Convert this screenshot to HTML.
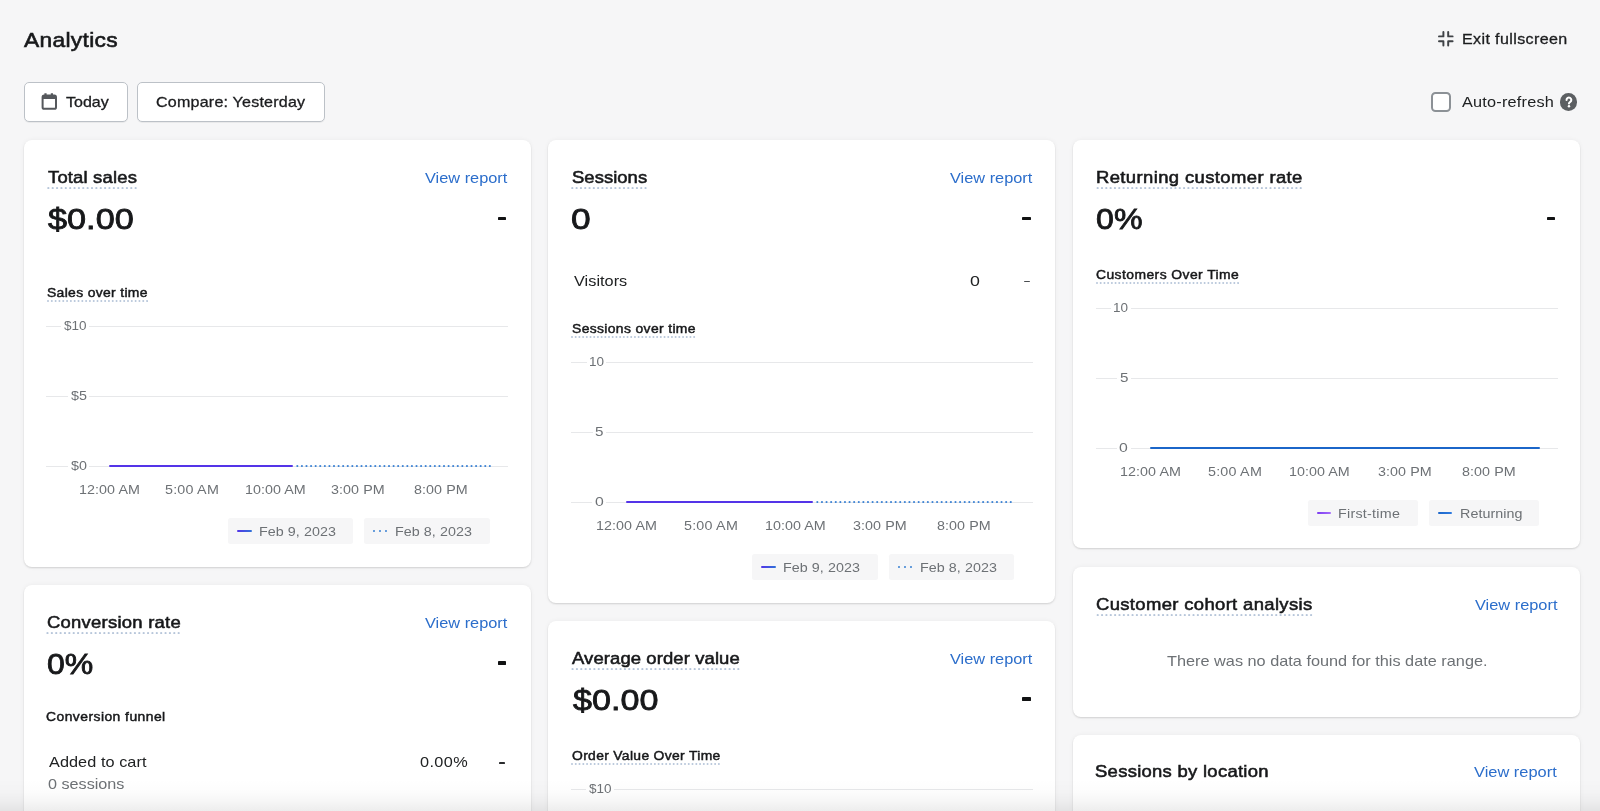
<!DOCTYPE html>
<html>
<head>
<meta charset="utf-8">
<title>Analytics</title>
<style>
*{box-sizing:border-box;margin:0;padding:0}
html,body{width:1600px;height:811px;overflow:hidden;background:#f6f6f7}
#w{position:absolute;left:0;top:0;width:1600px;height:811px;will-change:transform}
body{font-family:"Liberation Sans",sans-serif;color:#202223;position:relative;font-size:15px}
.a{position:absolute;white-space:nowrap;line-height:20px;height:20px}
.card{position:absolute;background:#fff;border-radius:8px;box-shadow:0 0 5px rgba(23,24,24,.05),0 1px 2px rgba(0,0,0,.14)}
.h1{font-size:21px;color:#17181a;-webkit-text-stroke:.6px #17181a}
.btn{position:absolute;background:#fff;border:1px solid #bcc1c7;border-radius:5px;box-shadow:0 1px 0 rgba(0,0,0,.05)}
.med{font-size:14.8px;color:#1b1c1e;-webkit-text-stroke:.3px #1b1c1e}
.reg{font-size:15px}
.title{font-size:17px;color:#17181a;-webkit-text-stroke:.56px #17181a}
.link{font-size:15.2px;color:#2c6ecb}
.big{font-size:30.2px;color:#17181a;-webkit-text-stroke:.85px #17181a}
.sub{font-size:12.8px;color:#17181a;-webkit-text-stroke:.46px #17181a}
.muted{color:#6d7175}
.ax{font-size:13px;color:#6d7175}
.yl{background:#fff}
.grid{position:absolute;height:1px;background:#e7e8ea}
.ln{position:absolute}
.leg{position:absolute;background:#f6f6f7;border-radius:2.5px}
.fade{position:absolute;left:0;right:0;bottom:0;height:32px;background:linear-gradient(to bottom,rgba(0,0,0,0) 0,rgba(0,0,0,.012) 40%,rgba(0,0,0,.035) 70%,rgba(0,0,0,.072) 100%)}
</style>
</head>
<body>
<div id="w">
<div class="a h1" style="left:24.37px;top:29.62px;letter-spacing:0.292px;transform:scaleX(1.0850);transform-origin:0 0;">Analytics</div>
<svg class="ln" style="left:1438.4px;top:31.3px;width:15.6px;height:15.6px" viewBox="0 0 15.6 15.6" fill="none" stroke="#3f4246" stroke-width="1.95" stroke-linecap="round" stroke-linejoin="round"><path d="M1 5.4H5.4V1M10.2 1V5.4H14.6M14.6 10.2H10.2V14.6M5.4 14.6V10.2H1"/></svg>
<div class="a med" style="left:1461.71px;top:29.17px;letter-spacing:0.348px;transform:scaleX(1.0850);transform-origin:0 0;">Exit fullscreen</div>
<div class="btn" style="left:24px;top:82px;width:104px;height:40px"></div>
<svg class="ln" style="left:41px;top:92.6px;width:17px;height:17.4px" viewBox="0 0 17 17.4"><rect x="1.6" y="2.6" width="13.4" height="13.2" rx="1.6" fill="none" stroke="#55585c" stroke-width="2"/><path d="M1.6 2.6h13.4v3.3H1.6zM3.4 .2h2.2v3H3.4zM9.8 .2h2.2v3H9.8z" fill="#55585c"/></svg>
<div class="a med" style="left:65.73px;top:91.77px;transform:scaleX(1.0828);transform-origin:0 0;">Today</div>
<div class="btn" style="left:137px;top:82px;width:188px;height:40px"></div>
<div class="a med" style="left:155.96px;top:91.77px;letter-spacing:0.197px;transform:scaleX(1.0850);transform-origin:0 0;">Compare: Yesterday</div>
<div class="ln" style="left:1431.2px;top:91.6px;width:20px;height:20px;border:2.1px solid #8c9196;border-radius:4.5px;background:#fff"></div>
<div class="a reg" style="left:1461.80px;top:91.60px;letter-spacing:0.190px;transform:scaleX(1.0850);transform-origin:0 0;">Auto-refresh</div>
<div class="ln" style="left:1559.8px;top:92.9px;width:17.7px;height:17.7px;border-radius:50%;background:#5c5f62"></div>
<svg class="ln" style="left:1559.8px;top:92.9px;width:17.7px;height:17.7px" viewBox="0 0 20 20"><path d="M7.4 7.9a2.7 2.7 0 1 1 4.2 2.2c-.85.55-1.45 1-1.45 1.8" fill="none" stroke="#fff" stroke-width="2.3" stroke-linecap="round"/><circle cx="10.15" cy="14.9" r="1.4" fill="#fff"/></svg>
<div class="card" style="left:23.5px;top:140px;width:507.2px;height:427.4px"></div>
<div class="a title" style="left:47.75px;top:168.11px;letter-spacing:0.157px;transform:scaleX(1.0850);transform-origin:0 0;">Total sales</div>
<svg class="ln" style="left:46.85px;top:187.30px;width:90.0px;height:2.2px" viewBox="0 0 90.0 2.2" fill="#b7c6da"><rect x="0.00" y="0" width="2.2" height="2.2" rx="1.10"/><rect x="4.39" y="0" width="2.2" height="2.2" rx="1.10"/><rect x="8.78" y="0" width="2.2" height="2.2" rx="1.10"/><rect x="13.17" y="0" width="2.2" height="2.2" rx="1.10"/><rect x="17.56" y="0" width="2.2" height="2.2" rx="1.10"/><rect x="21.95" y="0" width="2.2" height="2.2" rx="1.10"/><rect x="26.34" y="0" width="2.2" height="2.2" rx="1.10"/><rect x="30.73" y="0" width="2.2" height="2.2" rx="1.10"/><rect x="35.12" y="0" width="2.2" height="2.2" rx="1.10"/><rect x="39.51" y="0" width="2.2" height="2.2" rx="1.10"/><rect x="43.90" y="0" width="2.2" height="2.2" rx="1.10"/><rect x="48.29" y="0" width="2.2" height="2.2" rx="1.10"/><rect x="52.68" y="0" width="2.2" height="2.2" rx="1.10"/><rect x="57.07" y="0" width="2.2" height="2.2" rx="1.10"/><rect x="61.46" y="0" width="2.2" height="2.2" rx="1.10"/><rect x="65.85" y="0" width="2.2" height="2.2" rx="1.10"/><rect x="70.24" y="0" width="2.2" height="2.2" rx="1.10"/><rect x="74.63" y="0" width="2.2" height="2.2" rx="1.10"/><rect x="79.02" y="0" width="2.2" height="2.2" rx="1.10"/><rect x="83.41" y="0" width="2.2" height="2.2" rx="1.10"/><rect x="87.80" y="0" width="2.2" height="2.2" rx="1.10"/></svg>
<div class="a link" style="left:424.90px;top:167.93px;transform:scaleX(1.0758);transform-origin:0 0;">View report</div>
<div class="a big" style="left:47.88px;top:208.89px;transform:scaleX(1.1353);transform-origin:0 0;">$0.00</div>
<div class="ln" style="left:497.8px;top:216.50px;width:8.5px;height:3.4px;background:#111213;border-radius:.4px"></div>
<div class="a sub" style="left:47.23px;top:282.81px;letter-spacing:0.317px;transform:scaleX(1.0850);transform-origin:0 0;">Sales over time</div>
<svg class="ln" style="left:46.7px;top:300.25px;width:101.0px;height:2.0px" viewBox="0 0 101.0 2.0" fill="#b7c6da"><rect x="0.00" y="0" width="2.0" height="2.0" rx="1.00"/><rect x="3.81" y="0" width="2.0" height="2.0" rx="1.00"/><rect x="7.62" y="0" width="2.0" height="2.0" rx="1.00"/><rect x="11.43" y="0" width="2.0" height="2.0" rx="1.00"/><rect x="15.24" y="0" width="2.0" height="2.0" rx="1.00"/><rect x="19.05" y="0" width="2.0" height="2.0" rx="1.00"/><rect x="22.86" y="0" width="2.0" height="2.0" rx="1.00"/><rect x="26.67" y="0" width="2.0" height="2.0" rx="1.00"/><rect x="30.48" y="0" width="2.0" height="2.0" rx="1.00"/><rect x="34.29" y="0" width="2.0" height="2.0" rx="1.00"/><rect x="38.10" y="0" width="2.0" height="2.0" rx="1.00"/><rect x="41.91" y="0" width="2.0" height="2.0" rx="1.00"/><rect x="45.72" y="0" width="2.0" height="2.0" rx="1.00"/><rect x="49.52" y="0" width="2.0" height="2.0" rx="1.00"/><rect x="53.33" y="0" width="2.0" height="2.0" rx="1.00"/><rect x="57.14" y="0" width="2.0" height="2.0" rx="1.00"/><rect x="60.95" y="0" width="2.0" height="2.0" rx="1.00"/><rect x="64.76" y="0" width="2.0" height="2.0" rx="1.00"/><rect x="68.57" y="0" width="2.0" height="2.0" rx="1.00"/><rect x="72.38" y="0" width="2.0" height="2.0" rx="1.00"/><rect x="76.19" y="0" width="2.0" height="2.0" rx="1.00"/><rect x="80.00" y="0" width="2.0" height="2.0" rx="1.00"/><rect x="83.81" y="0" width="2.0" height="2.0" rx="1.00"/><rect x="87.62" y="0" width="2.0" height="2.0" rx="1.00"/><rect x="91.43" y="0" width="2.0" height="2.0" rx="1.00"/><rect x="95.24" y="0" width="2.0" height="2.0" rx="1.00"/><rect x="99.05" y="0" width="2.0" height="2.0" rx="1.00"/></svg>
<div class="grid" style="left:46px;top:325.75px;width:461.5px"></div>
<div class="ln" style="left:61.2px;top:320.25px;width:28.2px;height:12px;background:#fff"></div>
<div class="a ax" style="left:64.19px;top:315.65px;transform:scaleX(1.0381);transform-origin:0 0;">$10</div>
<div class="grid" style="left:46px;top:395.75px;width:461.5px"></div>
<div class="ln" style="left:67.8px;top:390.25px;width:21.6px;height:12px;background:#fff"></div>
<div class="a ax" style="left:70.77px;top:385.65px;letter-spacing:0.068px;transform:scaleX(1.1000);transform-origin:0 0;">$5</div>
<div class="grid" style="left:46px;top:465.75px;width:461.5px"></div>
<div class="ln" style="left:67.8px;top:460.25px;width:21.6px;height:12px;background:#fff"></div>
<div class="a ax" style="left:70.77px;top:455.65px;letter-spacing:0.068px;transform:scaleX(1.1000);transform-origin:0 0;">$0</div>
<div class="a ax" style="left:78.60px;top:479.90px;letter-spacing:0.065px;transform:scaleX(1.1000);transform-origin:0 0;">12:00 AM</div>
<div class="a ax" style="left:165.35px;top:479.90px;letter-spacing:0.201px;transform:scaleX(1.1000);transform-origin:0 0;">5:00 AM</div>
<div class="a ax" style="left:244.55px;top:479.90px;letter-spacing:0.026px;transform:scaleX(1.1000);transform-origin:0 0;">10:00 AM</div>
<div class="a ax" style="left:331.35px;top:479.90px;letter-spacing:0.072px;transform:scaleX(1.1000);transform-origin:0 0;">3:00 PM</div>
<div class="a ax" style="left:414.20px;top:479.90px;letter-spacing:0.072px;transform:scaleX(1.1000);transform-origin:0 0;">8:00 PM</div>
<svg class="ln" style="left:296.2px;top:465.15px;width:195.2px;height:2.1px" viewBox="0 0 195.2 2.1" fill="#3f84d4"><rect x="0.00" y="0" width="2.1" height="2.1" rx="1.05"/><rect x="4.60" y="0" width="2.1" height="2.1" rx="1.05"/><rect x="9.20" y="0" width="2.1" height="2.1" rx="1.05"/><rect x="13.79" y="0" width="2.1" height="2.1" rx="1.05"/><rect x="18.39" y="0" width="2.1" height="2.1" rx="1.05"/><rect x="22.99" y="0" width="2.1" height="2.1" rx="1.05"/><rect x="27.59" y="0" width="2.1" height="2.1" rx="1.05"/><rect x="32.18" y="0" width="2.1" height="2.1" rx="1.05"/><rect x="36.78" y="0" width="2.1" height="2.1" rx="1.05"/><rect x="41.38" y="0" width="2.1" height="2.1" rx="1.05"/><rect x="45.98" y="0" width="2.1" height="2.1" rx="1.05"/><rect x="50.57" y="0" width="2.1" height="2.1" rx="1.05"/><rect x="55.17" y="0" width="2.1" height="2.1" rx="1.05"/><rect x="59.77" y="0" width="2.1" height="2.1" rx="1.05"/><rect x="64.37" y="0" width="2.1" height="2.1" rx="1.05"/><rect x="68.96" y="0" width="2.1" height="2.1" rx="1.05"/><rect x="73.56" y="0" width="2.1" height="2.1" rx="1.05"/><rect x="78.16" y="0" width="2.1" height="2.1" rx="1.05"/><rect x="82.76" y="0" width="2.1" height="2.1" rx="1.05"/><rect x="87.35" y="0" width="2.1" height="2.1" rx="1.05"/><rect x="91.95" y="0" width="2.1" height="2.1" rx="1.05"/><rect x="96.55" y="0" width="2.1" height="2.1" rx="1.05"/><rect x="101.15" y="0" width="2.1" height="2.1" rx="1.05"/><rect x="105.75" y="0" width="2.1" height="2.1" rx="1.05"/><rect x="110.34" y="0" width="2.1" height="2.1" rx="1.05"/><rect x="114.94" y="0" width="2.1" height="2.1" rx="1.05"/><rect x="119.54" y="0" width="2.1" height="2.1" rx="1.05"/><rect x="124.14" y="0" width="2.1" height="2.1" rx="1.05"/><rect x="128.73" y="0" width="2.1" height="2.1" rx="1.05"/><rect x="133.33" y="0" width="2.1" height="2.1" rx="1.05"/><rect x="137.93" y="0" width="2.1" height="2.1" rx="1.05"/><rect x="142.53" y="0" width="2.1" height="2.1" rx="1.05"/><rect x="147.12" y="0" width="2.1" height="2.1" rx="1.05"/><rect x="151.72" y="0" width="2.1" height="2.1" rx="1.05"/><rect x="156.32" y="0" width="2.1" height="2.1" rx="1.05"/><rect x="160.92" y="0" width="2.1" height="2.1" rx="1.05"/><rect x="165.51" y="0" width="2.1" height="2.1" rx="1.05"/><rect x="170.11" y="0" width="2.1" height="2.1" rx="1.05"/><rect x="174.71" y="0" width="2.1" height="2.1" rx="1.05"/><rect x="179.31" y="0" width="2.1" height="2.1" rx="1.05"/><rect x="183.90" y="0" width="2.1" height="2.1" rx="1.05"/><rect x="188.50" y="0" width="2.1" height="2.1" rx="1.05"/><rect x="193.10" y="0" width="2.1" height="2.1" rx="1.05"/></svg>
<div class="ln" style="left:109.4px;top:464.90px;width:183.9px;height:2.3px;background:#5434e8;border-radius:1px"></div>
<div class="leg" style="left:228.2px;top:517.9px;width:124.8px;height:26.3px"></div>
<div class="ln" style="left:237.0px;top:529.90px;width:14.5px;height:2.2px;background:linear-gradient(to right,#5434e8,#2f73d8);border-radius:1px"></div>
<div class="a ax" style="left:258.80px;top:522.10px;letter-spacing:0.052px;transform:scaleX(1.1000);transform-origin:0 0;">Feb 9, 2023</div>
<div class="leg" style="left:364.4px;top:517.9px;width:125.6px;height:26.3px"></div>
<div class="ln" style="left:373.2px;top:530.10px;width:1.8px;height:1.8px;border-radius:50%;background:#3f84d4"></div>
<div class="ln" style="left:379.3px;top:530.10px;width:1.8px;height:1.8px;border-radius:50%;background:#3f84d4"></div>
<div class="ln" style="left:385.4px;top:530.10px;width:1.8px;height:1.8px;border-radius:50%;background:#3f84d4"></div>
<div class="a ax" style="left:395.30px;top:522.10px;letter-spacing:0.052px;transform:scaleX(1.1000);transform-origin:0 0;">Feb 8, 2023</div>
<div class="card" style="left:548px;top:140px;width:507.2px;height:463.2px"></div>
<div class="a title" style="left:571.71px;top:168.11px;letter-spacing:0.039px;transform:scaleX(1.0850);transform-origin:0 0;">Sessions</div>
<svg class="ln" style="left:571.35px;top:187.30px;width:75.9px;height:2.2px" viewBox="0 0 75.9 2.2" fill="#b7c6da"><rect x="0.00" y="0" width="2.2" height="2.2" rx="1.10"/><rect x="4.33" y="0" width="2.2" height="2.2" rx="1.10"/><rect x="8.66" y="0" width="2.2" height="2.2" rx="1.10"/><rect x="13.00" y="0" width="2.2" height="2.2" rx="1.10"/><rect x="17.33" y="0" width="2.2" height="2.2" rx="1.10"/><rect x="21.66" y="0" width="2.2" height="2.2" rx="1.10"/><rect x="25.99" y="0" width="2.2" height="2.2" rx="1.10"/><rect x="30.33" y="0" width="2.2" height="2.2" rx="1.10"/><rect x="34.66" y="0" width="2.2" height="2.2" rx="1.10"/><rect x="38.99" y="0" width="2.2" height="2.2" rx="1.10"/><rect x="43.32" y="0" width="2.2" height="2.2" rx="1.10"/><rect x="47.66" y="0" width="2.2" height="2.2" rx="1.10"/><rect x="51.99" y="0" width="2.2" height="2.2" rx="1.10"/><rect x="56.32" y="0" width="2.2" height="2.2" rx="1.10"/><rect x="60.65" y="0" width="2.2" height="2.2" rx="1.10"/><rect x="64.99" y="0" width="2.2" height="2.2" rx="1.10"/><rect x="69.32" y="0" width="2.2" height="2.2" rx="1.10"/><rect x="73.65" y="0" width="2.2" height="2.2" rx="1.10"/></svg>
<div class="a link" style="left:949.60px;top:167.93px;transform:scaleX(1.0758);transform-origin:0 0;">View report</div>
<div class="a big" style="left:571.02px;top:208.89px;transform:scaleX(1.1705);transform-origin:0 0;">0</div>
<div class="ln" style="left:1022px;top:216.50px;width:8.5px;height:3.4px;background:#111213;border-radius:.4px"></div>
<div class="a reg" style="left:573.65px;top:271.05px;letter-spacing:0.020px;transform:scaleX(1.0850);transform-origin:0 0;">Visitors</div>
<div class="a reg" style="left:969.81px;top:271.05px;transform:scaleX(1.1862);transform-origin:0 0;">0</div>
<div class="ln" style="left:1023.9px;top:281.10px;width:5.7px;height:1.3px;background:#4a4d50;border-radius:.4px"></div>
<div class="a sub" style="left:571.98px;top:318.56px;letter-spacing:0.337px;transform:scaleX(1.0850);transform-origin:0 0;">Sessions over time</div>
<svg class="ln" style="left:571.45px;top:336.00px;width:124.1px;height:2.0px" viewBox="0 0 124.1 2.0" fill="#b7c6da"><rect x="0.00" y="0" width="2.0" height="2.0" rx="1.00"/><rect x="3.70" y="0" width="2.0" height="2.0" rx="1.00"/><rect x="7.40" y="0" width="2.0" height="2.0" rx="1.00"/><rect x="11.10" y="0" width="2.0" height="2.0" rx="1.00"/><rect x="14.81" y="0" width="2.0" height="2.0" rx="1.00"/><rect x="18.51" y="0" width="2.0" height="2.0" rx="1.00"/><rect x="22.21" y="0" width="2.0" height="2.0" rx="1.00"/><rect x="25.91" y="0" width="2.0" height="2.0" rx="1.00"/><rect x="29.61" y="0" width="2.0" height="2.0" rx="1.00"/><rect x="33.31" y="0" width="2.0" height="2.0" rx="1.00"/><rect x="37.02" y="0" width="2.0" height="2.0" rx="1.00"/><rect x="40.72" y="0" width="2.0" height="2.0" rx="1.00"/><rect x="44.42" y="0" width="2.0" height="2.0" rx="1.00"/><rect x="48.12" y="0" width="2.0" height="2.0" rx="1.00"/><rect x="51.82" y="0" width="2.0" height="2.0" rx="1.00"/><rect x="55.52" y="0" width="2.0" height="2.0" rx="1.00"/><rect x="59.22" y="0" width="2.0" height="2.0" rx="1.00"/><rect x="62.93" y="0" width="2.0" height="2.0" rx="1.00"/><rect x="66.63" y="0" width="2.0" height="2.0" rx="1.00"/><rect x="70.33" y="0" width="2.0" height="2.0" rx="1.00"/><rect x="74.03" y="0" width="2.0" height="2.0" rx="1.00"/><rect x="77.73" y="0" width="2.0" height="2.0" rx="1.00"/><rect x="81.43" y="0" width="2.0" height="2.0" rx="1.00"/><rect x="85.13" y="0" width="2.0" height="2.0" rx="1.00"/><rect x="88.84" y="0" width="2.0" height="2.0" rx="1.00"/><rect x="92.54" y="0" width="2.0" height="2.0" rx="1.00"/><rect x="96.24" y="0" width="2.0" height="2.0" rx="1.00"/><rect x="99.94" y="0" width="2.0" height="2.0" rx="1.00"/><rect x="103.64" y="0" width="2.0" height="2.0" rx="1.00"/><rect x="107.34" y="0" width="2.0" height="2.0" rx="1.00"/><rect x="111.05" y="0" width="2.0" height="2.0" rx="1.00"/><rect x="114.75" y="0" width="2.0" height="2.0" rx="1.00"/><rect x="118.45" y="0" width="2.0" height="2.0" rx="1.00"/><rect x="122.15" y="0" width="2.0" height="2.0" rx="1.00"/></svg>
<div class="grid" style="left:571px;top:361.75px;width:461.5px"></div>
<div class="ln" style="left:586.5px;top:356.25px;width:19.9px;height:12px;background:#fff"></div>
<div class="a ax" style="left:588.66px;top:351.65px;transform:scaleX(1.0385);transform-origin:0 0;">10</div>
<div class="grid" style="left:571px;top:431.75px;width:461.5px"></div>
<div class="ln" style="left:592.7px;top:426.25px;width:13.7px;height:12px;background:#fff"></div>
<div class="a ax" style="left:595.32px;top:421.65px;transform:scaleX(1.1680);transform-origin:0 0;">5</div>
<div class="grid" style="left:571px;top:501.75px;width:461.5px"></div>
<div class="ln" style="left:592.4px;top:496.25px;width:14.0px;height:12px;background:#fff"></div>
<div class="a ax" style="left:594.99px;top:491.65px;transform:scaleX(1.2160);transform-origin:0 0;">0</div>
<div class="a ax" style="left:595.50px;top:515.90px;letter-spacing:0.065px;transform:scaleX(1.1000);transform-origin:0 0;">12:00 AM</div>
<div class="a ax" style="left:683.80px;top:515.90px;letter-spacing:0.201px;transform:scaleX(1.1000);transform-origin:0 0;">5:00 AM</div>
<div class="a ax" style="left:764.55px;top:515.90px;letter-spacing:0.026px;transform:scaleX(1.1000);transform-origin:0 0;">10:00 AM</div>
<div class="a ax" style="left:852.85px;top:515.90px;letter-spacing:0.072px;transform:scaleX(1.1000);transform-origin:0 0;">3:00 PM</div>
<div class="a ax" style="left:937.30px;top:515.90px;letter-spacing:0.072px;transform:scaleX(1.1000);transform-origin:0 0;">8:00 PM</div>
<svg class="ln" style="left:816.3px;top:501.15px;width:196.1px;height:2.1px" viewBox="0 0 196.1 2.1" fill="#3f84d4"><rect x="0.00" y="0" width="2.1" height="2.1" rx="1.05"/><rect x="4.62" y="0" width="2.1" height="2.1" rx="1.05"/><rect x="9.24" y="0" width="2.1" height="2.1" rx="1.05"/><rect x="13.86" y="0" width="2.1" height="2.1" rx="1.05"/><rect x="18.48" y="0" width="2.1" height="2.1" rx="1.05"/><rect x="23.10" y="0" width="2.1" height="2.1" rx="1.05"/><rect x="27.71" y="0" width="2.1" height="2.1" rx="1.05"/><rect x="32.33" y="0" width="2.1" height="2.1" rx="1.05"/><rect x="36.95" y="0" width="2.1" height="2.1" rx="1.05"/><rect x="41.57" y="0" width="2.1" height="2.1" rx="1.05"/><rect x="46.19" y="0" width="2.1" height="2.1" rx="1.05"/><rect x="50.81" y="0" width="2.1" height="2.1" rx="1.05"/><rect x="55.43" y="0" width="2.1" height="2.1" rx="1.05"/><rect x="60.05" y="0" width="2.1" height="2.1" rx="1.05"/><rect x="64.67" y="0" width="2.1" height="2.1" rx="1.05"/><rect x="69.29" y="0" width="2.1" height="2.1" rx="1.05"/><rect x="73.90" y="0" width="2.1" height="2.1" rx="1.05"/><rect x="78.52" y="0" width="2.1" height="2.1" rx="1.05"/><rect x="83.14" y="0" width="2.1" height="2.1" rx="1.05"/><rect x="87.76" y="0" width="2.1" height="2.1" rx="1.05"/><rect x="92.38" y="0" width="2.1" height="2.1" rx="1.05"/><rect x="97.00" y="0" width="2.1" height="2.1" rx="1.05"/><rect x="101.62" y="0" width="2.1" height="2.1" rx="1.05"/><rect x="106.24" y="0" width="2.1" height="2.1" rx="1.05"/><rect x="110.86" y="0" width="2.1" height="2.1" rx="1.05"/><rect x="115.48" y="0" width="2.1" height="2.1" rx="1.05"/><rect x="120.10" y="0" width="2.1" height="2.1" rx="1.05"/><rect x="124.71" y="0" width="2.1" height="2.1" rx="1.05"/><rect x="129.33" y="0" width="2.1" height="2.1" rx="1.05"/><rect x="133.95" y="0" width="2.1" height="2.1" rx="1.05"/><rect x="138.57" y="0" width="2.1" height="2.1" rx="1.05"/><rect x="143.19" y="0" width="2.1" height="2.1" rx="1.05"/><rect x="147.81" y="0" width="2.1" height="2.1" rx="1.05"/><rect x="152.43" y="0" width="2.1" height="2.1" rx="1.05"/><rect x="157.05" y="0" width="2.1" height="2.1" rx="1.05"/><rect x="161.67" y="0" width="2.1" height="2.1" rx="1.05"/><rect x="166.29" y="0" width="2.1" height="2.1" rx="1.05"/><rect x="170.90" y="0" width="2.1" height="2.1" rx="1.05"/><rect x="175.52" y="0" width="2.1" height="2.1" rx="1.05"/><rect x="180.14" y="0" width="2.1" height="2.1" rx="1.05"/><rect x="184.76" y="0" width="2.1" height="2.1" rx="1.05"/><rect x="189.38" y="0" width="2.1" height="2.1" rx="1.05"/><rect x="194.00" y="0" width="2.1" height="2.1" rx="1.05"/></svg>
<div class="ln" style="left:626px;top:500.90px;width:186.8px;height:2.3px;background:#5434e8;border-radius:1px"></div>
<div class="leg" style="left:752.3px;top:553.9px;width:125.7px;height:26.3px"></div>
<div class="ln" style="left:761.1px;top:565.90px;width:14.5px;height:2.2px;background:linear-gradient(to right,#5434e8,#2f73d8);border-radius:1px"></div>
<div class="a ax" style="left:782.90px;top:558.10px;letter-spacing:0.052px;transform:scaleX(1.1000);transform-origin:0 0;">Feb 9, 2023</div>
<div class="leg" style="left:889px;top:553.9px;width:125.3px;height:26.3px"></div>
<div class="ln" style="left:897.8px;top:566.10px;width:1.8px;height:1.8px;border-radius:50%;background:#3f84d4"></div>
<div class="ln" style="left:903.9px;top:566.10px;width:1.8px;height:1.8px;border-radius:50%;background:#3f84d4"></div>
<div class="ln" style="left:910.0px;top:566.10px;width:1.8px;height:1.8px;border-radius:50%;background:#3f84d4"></div>
<div class="a ax" style="left:919.90px;top:558.10px;letter-spacing:0.052px;transform:scaleX(1.1000);transform-origin:0 0;">Feb 8, 2023</div>
<div class="card" style="left:1073px;top:140px;width:507.2px;height:408.2px"></div>
<div class="a title" style="left:1095.82px;top:168.11px;letter-spacing:0.357px;transform:scaleX(1.0850);transform-origin:0 0;">Returning customer rate</div>
<svg class="ln" style="left:1096.0px;top:187.30px;width:206.4px;height:2.2px" viewBox="0 0 206.4 2.2" fill="#b7c6da"><rect x="0.00" y="0" width="2.2" height="2.2" rx="1.10"/><rect x="4.34" y="0" width="2.2" height="2.2" rx="1.10"/><rect x="8.69" y="0" width="2.2" height="2.2" rx="1.10"/><rect x="13.03" y="0" width="2.2" height="2.2" rx="1.10"/><rect x="17.38" y="0" width="2.2" height="2.2" rx="1.10"/><rect x="21.72" y="0" width="2.2" height="2.2" rx="1.10"/><rect x="26.07" y="0" width="2.2" height="2.2" rx="1.10"/><rect x="30.41" y="0" width="2.2" height="2.2" rx="1.10"/><rect x="34.76" y="0" width="2.2" height="2.2" rx="1.10"/><rect x="39.10" y="0" width="2.2" height="2.2" rx="1.10"/><rect x="43.45" y="0" width="2.2" height="2.2" rx="1.10"/><rect x="47.79" y="0" width="2.2" height="2.2" rx="1.10"/><rect x="52.14" y="0" width="2.2" height="2.2" rx="1.10"/><rect x="56.48" y="0" width="2.2" height="2.2" rx="1.10"/><rect x="60.83" y="0" width="2.2" height="2.2" rx="1.10"/><rect x="65.17" y="0" width="2.2" height="2.2" rx="1.10"/><rect x="69.51" y="0" width="2.2" height="2.2" rx="1.10"/><rect x="73.86" y="0" width="2.2" height="2.2" rx="1.10"/><rect x="78.20" y="0" width="2.2" height="2.2" rx="1.10"/><rect x="82.55" y="0" width="2.2" height="2.2" rx="1.10"/><rect x="86.89" y="0" width="2.2" height="2.2" rx="1.10"/><rect x="91.24" y="0" width="2.2" height="2.2" rx="1.10"/><rect x="95.58" y="0" width="2.2" height="2.2" rx="1.10"/><rect x="99.93" y="0" width="2.2" height="2.2" rx="1.10"/><rect x="104.27" y="0" width="2.2" height="2.2" rx="1.10"/><rect x="108.62" y="0" width="2.2" height="2.2" rx="1.10"/><rect x="112.96" y="0" width="2.2" height="2.2" rx="1.10"/><rect x="117.31" y="0" width="2.2" height="2.2" rx="1.10"/><rect x="121.65" y="0" width="2.2" height="2.2" rx="1.10"/><rect x="126.00" y="0" width="2.2" height="2.2" rx="1.10"/><rect x="130.34" y="0" width="2.2" height="2.2" rx="1.10"/><rect x="134.69" y="0" width="2.2" height="2.2" rx="1.10"/><rect x="139.03" y="0" width="2.2" height="2.2" rx="1.10"/><rect x="143.37" y="0" width="2.2" height="2.2" rx="1.10"/><rect x="147.72" y="0" width="2.2" height="2.2" rx="1.10"/><rect x="152.06" y="0" width="2.2" height="2.2" rx="1.10"/><rect x="156.41" y="0" width="2.2" height="2.2" rx="1.10"/><rect x="160.75" y="0" width="2.2" height="2.2" rx="1.10"/><rect x="165.10" y="0" width="2.2" height="2.2" rx="1.10"/><rect x="169.44" y="0" width="2.2" height="2.2" rx="1.10"/><rect x="173.79" y="0" width="2.2" height="2.2" rx="1.10"/><rect x="178.13" y="0" width="2.2" height="2.2" rx="1.10"/><rect x="182.48" y="0" width="2.2" height="2.2" rx="1.10"/><rect x="186.82" y="0" width="2.2" height="2.2" rx="1.10"/><rect x="191.17" y="0" width="2.2" height="2.2" rx="1.10"/><rect x="195.51" y="0" width="2.2" height="2.2" rx="1.10"/><rect x="199.86" y="0" width="2.2" height="2.2" rx="1.10"/><rect x="204.20" y="0" width="2.2" height="2.2" rx="1.10"/></svg>
<div class="a big" style="left:1095.80px;top:208.89px;transform:scaleX(1.0651);transform-origin:0 0;">0%</div>
<div class="ln" style="left:1546.8px;top:216.50px;width:8.5px;height:3.4px;background:#111213;border-radius:.4px"></div>
<div class="a sub" style="left:1096.36px;top:264.71px;letter-spacing:0.397px;transform:scaleX(1.0850);transform-origin:0 0;">Customers Over Time</div>
<svg class="ln" style="left:1096.1000000000001px;top:282.15px;width:143.0px;height:2.0px" viewBox="0 0 143.0 2.0" fill="#b7c6da"><rect x="0.00" y="0" width="2.0" height="2.0" rx="1.00"/><rect x="3.71" y="0" width="2.0" height="2.0" rx="1.00"/><rect x="7.42" y="0" width="2.0" height="2.0" rx="1.00"/><rect x="11.14" y="0" width="2.0" height="2.0" rx="1.00"/><rect x="14.85" y="0" width="2.0" height="2.0" rx="1.00"/><rect x="18.56" y="0" width="2.0" height="2.0" rx="1.00"/><rect x="22.27" y="0" width="2.0" height="2.0" rx="1.00"/><rect x="25.98" y="0" width="2.0" height="2.0" rx="1.00"/><rect x="29.69" y="0" width="2.0" height="2.0" rx="1.00"/><rect x="33.41" y="0" width="2.0" height="2.0" rx="1.00"/><rect x="37.12" y="0" width="2.0" height="2.0" rx="1.00"/><rect x="40.83" y="0" width="2.0" height="2.0" rx="1.00"/><rect x="44.54" y="0" width="2.0" height="2.0" rx="1.00"/><rect x="48.25" y="0" width="2.0" height="2.0" rx="1.00"/><rect x="51.97" y="0" width="2.0" height="2.0" rx="1.00"/><rect x="55.68" y="0" width="2.0" height="2.0" rx="1.00"/><rect x="59.39" y="0" width="2.0" height="2.0" rx="1.00"/><rect x="63.10" y="0" width="2.0" height="2.0" rx="1.00"/><rect x="66.81" y="0" width="2.0" height="2.0" rx="1.00"/><rect x="70.52" y="0" width="2.0" height="2.0" rx="1.00"/><rect x="74.24" y="0" width="2.0" height="2.0" rx="1.00"/><rect x="77.95" y="0" width="2.0" height="2.0" rx="1.00"/><rect x="81.66" y="0" width="2.0" height="2.0" rx="1.00"/><rect x="85.37" y="0" width="2.0" height="2.0" rx="1.00"/><rect x="89.08" y="0" width="2.0" height="2.0" rx="1.00"/><rect x="92.80" y="0" width="2.0" height="2.0" rx="1.00"/><rect x="96.51" y="0" width="2.0" height="2.0" rx="1.00"/><rect x="100.22" y="0" width="2.0" height="2.0" rx="1.00"/><rect x="103.93" y="0" width="2.0" height="2.0" rx="1.00"/><rect x="107.64" y="0" width="2.0" height="2.0" rx="1.00"/><rect x="111.36" y="0" width="2.0" height="2.0" rx="1.00"/><rect x="115.07" y="0" width="2.0" height="2.0" rx="1.00"/><rect x="118.78" y="0" width="2.0" height="2.0" rx="1.00"/><rect x="122.49" y="0" width="2.0" height="2.0" rx="1.00"/><rect x="126.20" y="0" width="2.0" height="2.0" rx="1.00"/><rect x="129.91" y="0" width="2.0" height="2.0" rx="1.00"/><rect x="133.63" y="0" width="2.0" height="2.0" rx="1.00"/><rect x="137.34" y="0" width="2.0" height="2.0" rx="1.00"/><rect x="141.05" y="0" width="2.0" height="2.0" rx="1.00"/></svg>
<div class="grid" style="left:1095.5px;top:307.80px;width:462.5px"></div>
<div class="ln" style="left:1110.7px;top:302.3px;width:19.9px;height:12px;background:#fff"></div>
<div class="a ax" style="left:1112.86px;top:297.70px;transform:scaleX(1.0385);transform-origin:0 0;">10</div>
<div class="grid" style="left:1095.5px;top:377.70px;width:462.5px"></div>
<div class="ln" style="left:1116.9px;top:372.2px;width:13.7px;height:12px;background:#fff"></div>
<div class="a ax" style="left:1119.52px;top:367.60px;transform:scaleX(1.1680);transform-origin:0 0;">5</div>
<div class="grid" style="left:1095.5px;top:447.60px;width:462.5px"></div>
<div class="ln" style="left:1116.6px;top:442.1px;width:14.0px;height:12px;background:#fff"></div>
<div class="a ax" style="left:1119.19px;top:437.50px;transform:scaleX(1.2160);transform-origin:0 0;">0</div>
<div class="a ax" style="left:1119.70px;top:461.75px;letter-spacing:0.065px;transform:scaleX(1.1000);transform-origin:0 0;">12:00 AM</div>
<div class="a ax" style="left:1208.15px;top:461.75px;letter-spacing:0.201px;transform:scaleX(1.1000);transform-origin:0 0;">5:00 AM</div>
<div class="a ax" style="left:1289.05px;top:461.75px;letter-spacing:0.026px;transform:scaleX(1.1000);transform-origin:0 0;">10:00 AM</div>
<div class="a ax" style="left:1377.50px;top:461.75px;letter-spacing:0.072px;transform:scaleX(1.1000);transform-origin:0 0;">3:00 PM</div>
<div class="a ax" style="left:1462.10px;top:461.75px;letter-spacing:0.072px;transform:scaleX(1.1000);transform-origin:0 0;">8:00 PM</div>
<div class="ln" style="left:1150.1px;top:446.85px;width:389.5px;height:2.3px;background:#1b66c9;border-radius:1px"></div>
<div class="leg" style="left:1307.85px;top:500.15px;width:109.9px;height:26.3px"></div>
<div class="ln" style="left:1316.6px;top:512.15px;width:14.5px;height:2.2px;background:linear-gradient(to right,#7b3cf0,#a56bfb);border-radius:1px"></div>
<div class="a ax" style="left:1338.25px;top:504.35px;letter-spacing:0.232px;transform:scaleX(1.1000);transform-origin:0 0;">First-time</div>
<div class="leg" style="left:1429.1px;top:500.15px;width:110.3px;height:26.3px"></div>
<div class="ln" style="left:1437.9px;top:512.15px;width:14.5px;height:2.2px;background:linear-gradient(to right,#1b66c9,#2f7be0);border-radius:1px"></div>
<div class="a ax" style="left:1459.50px;top:504.35px;letter-spacing:0.051px;transform:scaleX(1.1000);transform-origin:0 0;">Returning</div>
<div class="card" style="left:23.5px;top:584.9px;width:507.2px;height:300px"></div>
<div class="a title" style="left:46.81px;top:613.01px;letter-spacing:0.233px;transform:scaleX(1.0850);transform-origin:0 0;">Conversion rate</div>
<svg class="ln" style="left:46.45px;top:632.20px;width:134.1px;height:2.2px" viewBox="0 0 134.1 2.2" fill="#b7c6da"><rect x="0.00" y="0" width="2.2" height="2.2" rx="1.10"/><rect x="4.40" y="0" width="2.2" height="2.2" rx="1.10"/><rect x="8.80" y="0" width="2.2" height="2.2" rx="1.10"/><rect x="13.19" y="0" width="2.2" height="2.2" rx="1.10"/><rect x="17.59" y="0" width="2.2" height="2.2" rx="1.10"/><rect x="21.99" y="0" width="2.2" height="2.2" rx="1.10"/><rect x="26.39" y="0" width="2.2" height="2.2" rx="1.10"/><rect x="30.79" y="0" width="2.2" height="2.2" rx="1.10"/><rect x="35.19" y="0" width="2.2" height="2.2" rx="1.10"/><rect x="39.58" y="0" width="2.2" height="2.2" rx="1.10"/><rect x="43.98" y="0" width="2.2" height="2.2" rx="1.10"/><rect x="48.38" y="0" width="2.2" height="2.2" rx="1.10"/><rect x="52.78" y="0" width="2.2" height="2.2" rx="1.10"/><rect x="57.18" y="0" width="2.2" height="2.2" rx="1.10"/><rect x="61.58" y="0" width="2.2" height="2.2" rx="1.10"/><rect x="65.97" y="0" width="2.2" height="2.2" rx="1.10"/><rect x="70.37" y="0" width="2.2" height="2.2" rx="1.10"/><rect x="74.77" y="0" width="2.2" height="2.2" rx="1.10"/><rect x="79.17" y="0" width="2.2" height="2.2" rx="1.10"/><rect x="83.57" y="0" width="2.2" height="2.2" rx="1.10"/><rect x="87.97" y="0" width="2.2" height="2.2" rx="1.10"/><rect x="92.36" y="0" width="2.2" height="2.2" rx="1.10"/><rect x="96.76" y="0" width="2.2" height="2.2" rx="1.10"/><rect x="101.16" y="0" width="2.2" height="2.2" rx="1.10"/><rect x="105.56" y="0" width="2.2" height="2.2" rx="1.10"/><rect x="109.96" y="0" width="2.2" height="2.2" rx="1.10"/><rect x="114.36" y="0" width="2.2" height="2.2" rx="1.10"/><rect x="118.75" y="0" width="2.2" height="2.2" rx="1.10"/><rect x="123.15" y="0" width="2.2" height="2.2" rx="1.10"/><rect x="127.55" y="0" width="2.2" height="2.2" rx="1.10"/><rect x="131.95" y="0" width="2.2" height="2.2" rx="1.10"/></svg>
<div class="a link" style="left:424.90px;top:612.83px;transform:scaleX(1.0758);transform-origin:0 0;">View report</div>
<div class="a big" style="left:46.55px;top:653.84px;transform:scaleX(1.0604);transform-origin:0 0;">0%</div>
<div class="ln" style="left:497.8px;top:661.40px;width:8.5px;height:3.4px;background:#111213;border-radius:.4px"></div>
<div class="a sub" style="left:46.11px;top:707.46px;letter-spacing:0.419px;transform:scaleX(1.0850);transform-origin:0 0;">Conversion funnel</div>
<div class="a reg" style="left:48.75px;top:751.65px;letter-spacing:0.047px;transform:scaleX(1.0850);transform-origin:0 0;">Added to cart</div>
<div class="a reg" style="left:420.31px;top:751.80px;letter-spacing:0.351px;transform:scaleX(1.0850);transform-origin:0 0;">0.00%</div>
<div class="ln" style="left:499.4px;top:762.00px;width:5.2px;height:1.6px;background:#2a2c2e;border-radius:.4px"></div>
<div class="a reg muted" style="left:48.21px;top:774.05px;transform:scaleX(1.0789);transform-origin:0 0;">0 sessions</div>
<div class="card" style="left:548px;top:621px;width:507.2px;height:300px"></div>
<div class="a title" style="left:572.47px;top:649.01px;letter-spacing:0.099px;transform:scaleX(1.0850);transform-origin:0 0;">Average order value</div>
<svg class="ln" style="left:571.3000000000001px;top:668.20px;width:168.9px;height:2.2px" viewBox="0 0 168.9 2.2" fill="#b7c6da"><rect x="0.00" y="0" width="2.2" height="2.2" rx="1.10"/><rect x="4.39" y="0" width="2.2" height="2.2" rx="1.10"/><rect x="8.77" y="0" width="2.2" height="2.2" rx="1.10"/><rect x="13.16" y="0" width="2.2" height="2.2" rx="1.10"/><rect x="17.55" y="0" width="2.2" height="2.2" rx="1.10"/><rect x="21.93" y="0" width="2.2" height="2.2" rx="1.10"/><rect x="26.32" y="0" width="2.2" height="2.2" rx="1.10"/><rect x="30.71" y="0" width="2.2" height="2.2" rx="1.10"/><rect x="35.09" y="0" width="2.2" height="2.2" rx="1.10"/><rect x="39.48" y="0" width="2.2" height="2.2" rx="1.10"/><rect x="43.87" y="0" width="2.2" height="2.2" rx="1.10"/><rect x="48.26" y="0" width="2.2" height="2.2" rx="1.10"/><rect x="52.64" y="0" width="2.2" height="2.2" rx="1.10"/><rect x="57.03" y="0" width="2.2" height="2.2" rx="1.10"/><rect x="61.42" y="0" width="2.2" height="2.2" rx="1.10"/><rect x="65.80" y="0" width="2.2" height="2.2" rx="1.10"/><rect x="70.19" y="0" width="2.2" height="2.2" rx="1.10"/><rect x="74.58" y="0" width="2.2" height="2.2" rx="1.10"/><rect x="78.96" y="0" width="2.2" height="2.2" rx="1.10"/><rect x="83.35" y="0" width="2.2" height="2.2" rx="1.10"/><rect x="87.74" y="0" width="2.2" height="2.2" rx="1.10"/><rect x="92.12" y="0" width="2.2" height="2.2" rx="1.10"/><rect x="96.51" y="0" width="2.2" height="2.2" rx="1.10"/><rect x="100.90" y="0" width="2.2" height="2.2" rx="1.10"/><rect x="105.28" y="0" width="2.2" height="2.2" rx="1.10"/><rect x="109.67" y="0" width="2.2" height="2.2" rx="1.10"/><rect x="114.06" y="0" width="2.2" height="2.2" rx="1.10"/><rect x="118.44" y="0" width="2.2" height="2.2" rx="1.10"/><rect x="122.83" y="0" width="2.2" height="2.2" rx="1.10"/><rect x="127.22" y="0" width="2.2" height="2.2" rx="1.10"/><rect x="131.61" y="0" width="2.2" height="2.2" rx="1.10"/><rect x="135.99" y="0" width="2.2" height="2.2" rx="1.10"/><rect x="140.38" y="0" width="2.2" height="2.2" rx="1.10"/><rect x="144.77" y="0" width="2.2" height="2.2" rx="1.10"/><rect x="149.15" y="0" width="2.2" height="2.2" rx="1.10"/><rect x="153.54" y="0" width="2.2" height="2.2" rx="1.10"/><rect x="157.93" y="0" width="2.2" height="2.2" rx="1.10"/><rect x="162.31" y="0" width="2.2" height="2.2" rx="1.10"/><rect x="166.70" y="0" width="2.2" height="2.2" rx="1.10"/></svg>
<div class="a link" style="left:949.60px;top:648.93px;transform:scaleX(1.0758);transform-origin:0 0;">View report</div>
<div class="a big" style="left:572.93px;top:689.84px;transform:scaleX(1.1300);transform-origin:0 0;">$0.00</div>
<div class="ln" style="left:1022px;top:697.40px;width:8.5px;height:3.4px;background:#111213;border-radius:.4px"></div>
<div class="a sub" style="left:571.93px;top:745.76px;letter-spacing:0.302px;transform:scaleX(1.0850);transform-origin:0 0;">Order Value Over Time</div>
<svg class="ln" style="left:571.4000000000001px;top:763.20px;width:148.9px;height:2.0px" viewBox="0 0 148.9 2.0" fill="#b7c6da"><rect x="0.00" y="0" width="2.0" height="2.0" rx="1.00"/><rect x="3.77" y="0" width="2.0" height="2.0" rx="1.00"/><rect x="7.53" y="0" width="2.0" height="2.0" rx="1.00"/><rect x="11.30" y="0" width="2.0" height="2.0" rx="1.00"/><rect x="15.07" y="0" width="2.0" height="2.0" rx="1.00"/><rect x="18.83" y="0" width="2.0" height="2.0" rx="1.00"/><rect x="22.60" y="0" width="2.0" height="2.0" rx="1.00"/><rect x="26.37" y="0" width="2.0" height="2.0" rx="1.00"/><rect x="30.13" y="0" width="2.0" height="2.0" rx="1.00"/><rect x="33.90" y="0" width="2.0" height="2.0" rx="1.00"/><rect x="37.67" y="0" width="2.0" height="2.0" rx="1.00"/><rect x="41.43" y="0" width="2.0" height="2.0" rx="1.00"/><rect x="45.20" y="0" width="2.0" height="2.0" rx="1.00"/><rect x="48.97" y="0" width="2.0" height="2.0" rx="1.00"/><rect x="52.73" y="0" width="2.0" height="2.0" rx="1.00"/><rect x="56.50" y="0" width="2.0" height="2.0" rx="1.00"/><rect x="60.27" y="0" width="2.0" height="2.0" rx="1.00"/><rect x="64.03" y="0" width="2.0" height="2.0" rx="1.00"/><rect x="67.80" y="0" width="2.0" height="2.0" rx="1.00"/><rect x="71.57" y="0" width="2.0" height="2.0" rx="1.00"/><rect x="75.33" y="0" width="2.0" height="2.0" rx="1.00"/><rect x="79.10" y="0" width="2.0" height="2.0" rx="1.00"/><rect x="82.87" y="0" width="2.0" height="2.0" rx="1.00"/><rect x="86.63" y="0" width="2.0" height="2.0" rx="1.00"/><rect x="90.40" y="0" width="2.0" height="2.0" rx="1.00"/><rect x="94.17" y="0" width="2.0" height="2.0" rx="1.00"/><rect x="97.93" y="0" width="2.0" height="2.0" rx="1.00"/><rect x="101.70" y="0" width="2.0" height="2.0" rx="1.00"/><rect x="105.47" y="0" width="2.0" height="2.0" rx="1.00"/><rect x="109.23" y="0" width="2.0" height="2.0" rx="1.00"/><rect x="113.00" y="0" width="2.0" height="2.0" rx="1.00"/><rect x="116.77" y="0" width="2.0" height="2.0" rx="1.00"/><rect x="120.53" y="0" width="2.0" height="2.0" rx="1.00"/><rect x="124.30" y="0" width="2.0" height="2.0" rx="1.00"/><rect x="128.07" y="0" width="2.0" height="2.0" rx="1.00"/><rect x="131.83" y="0" width="2.0" height="2.0" rx="1.00"/><rect x="135.60" y="0" width="2.0" height="2.0" rx="1.00"/><rect x="139.37" y="0" width="2.0" height="2.0" rx="1.00"/><rect x="143.13" y="0" width="2.0" height="2.0" rx="1.00"/><rect x="146.90" y="0" width="2.0" height="2.0" rx="1.00"/></svg>
<div class="grid" style="left:571px;top:788.8px;width:461.5px"></div>
<div class="ln" style="left:586.2px;top:783.3px;width:28.2px;height:12px;background:#fff"></div>
<div class="a ax" style="left:589.14px;top:778.70px;transform:scaleX(1.0381);transform-origin:0 0;">$10</div>
<div class="card" style="left:1073px;top:567px;width:507.2px;height:149.5px"></div>
<div class="a title" style="left:1096.36px;top:595.01px;letter-spacing:0.323px;transform:scaleX(1.0850);transform-origin:0 0;">Customer cohort analysis</div>
<svg class="ln" style="left:1096.0px;top:614.20px;width:216.8px;height:2.2px" viewBox="0 0 216.8 2.2" fill="#b7c6da"><rect x="0.00" y="0" width="2.2" height="2.2" rx="1.10"/><rect x="4.38" y="0" width="2.2" height="2.2" rx="1.10"/><rect x="8.76" y="0" width="2.2" height="2.2" rx="1.10"/><rect x="13.14" y="0" width="2.2" height="2.2" rx="1.10"/><rect x="17.52" y="0" width="2.2" height="2.2" rx="1.10"/><rect x="21.90" y="0" width="2.2" height="2.2" rx="1.10"/><rect x="26.28" y="0" width="2.2" height="2.2" rx="1.10"/><rect x="30.66" y="0" width="2.2" height="2.2" rx="1.10"/><rect x="35.04" y="0" width="2.2" height="2.2" rx="1.10"/><rect x="39.42" y="0" width="2.2" height="2.2" rx="1.10"/><rect x="43.80" y="0" width="2.2" height="2.2" rx="1.10"/><rect x="48.18" y="0" width="2.2" height="2.2" rx="1.10"/><rect x="52.56" y="0" width="2.2" height="2.2" rx="1.10"/><rect x="56.93" y="0" width="2.2" height="2.2" rx="1.10"/><rect x="61.31" y="0" width="2.2" height="2.2" rx="1.10"/><rect x="65.69" y="0" width="2.2" height="2.2" rx="1.10"/><rect x="70.07" y="0" width="2.2" height="2.2" rx="1.10"/><rect x="74.45" y="0" width="2.2" height="2.2" rx="1.10"/><rect x="78.83" y="0" width="2.2" height="2.2" rx="1.10"/><rect x="83.21" y="0" width="2.2" height="2.2" rx="1.10"/><rect x="87.59" y="0" width="2.2" height="2.2" rx="1.10"/><rect x="91.97" y="0" width="2.2" height="2.2" rx="1.10"/><rect x="96.35" y="0" width="2.2" height="2.2" rx="1.10"/><rect x="100.73" y="0" width="2.2" height="2.2" rx="1.10"/><rect x="105.11" y="0" width="2.2" height="2.2" rx="1.10"/><rect x="109.49" y="0" width="2.2" height="2.2" rx="1.10"/><rect x="113.87" y="0" width="2.2" height="2.2" rx="1.10"/><rect x="118.25" y="0" width="2.2" height="2.2" rx="1.10"/><rect x="122.63" y="0" width="2.2" height="2.2" rx="1.10"/><rect x="127.01" y="0" width="2.2" height="2.2" rx="1.10"/><rect x="131.39" y="0" width="2.2" height="2.2" rx="1.10"/><rect x="135.77" y="0" width="2.2" height="2.2" rx="1.10"/><rect x="140.15" y="0" width="2.2" height="2.2" rx="1.10"/><rect x="144.53" y="0" width="2.2" height="2.2" rx="1.10"/><rect x="148.91" y="0" width="2.2" height="2.2" rx="1.10"/><rect x="153.29" y="0" width="2.2" height="2.2" rx="1.10"/><rect x="157.67" y="0" width="2.2" height="2.2" rx="1.10"/><rect x="162.04" y="0" width="2.2" height="2.2" rx="1.10"/><rect x="166.42" y="0" width="2.2" height="2.2" rx="1.10"/><rect x="170.80" y="0" width="2.2" height="2.2" rx="1.10"/><rect x="175.18" y="0" width="2.2" height="2.2" rx="1.10"/><rect x="179.56" y="0" width="2.2" height="2.2" rx="1.10"/><rect x="183.94" y="0" width="2.2" height="2.2" rx="1.10"/><rect x="188.32" y="0" width="2.2" height="2.2" rx="1.10"/><rect x="192.70" y="0" width="2.2" height="2.2" rx="1.10"/><rect x="197.08" y="0" width="2.2" height="2.2" rx="1.10"/><rect x="201.46" y="0" width="2.2" height="2.2" rx="1.10"/><rect x="205.84" y="0" width="2.2" height="2.2" rx="1.10"/><rect x="210.22" y="0" width="2.2" height="2.2" rx="1.10"/><rect x="214.60" y="0" width="2.2" height="2.2" rx="1.10"/></svg>
<div class="a link" style="left:1474.60px;top:594.93px;transform:scaleX(1.0771);transform-origin:0 0;">View report</div>
<div class="a reg muted" style="left:1166.63px;top:651.05px;letter-spacing:0.005px;transform:scaleX(1.0850);transform-origin:0 0;">There was no data found for this date range.</div>
<div class="card" style="left:1073px;top:735px;width:507.2px;height:200px"></div>
<div class="a title" style="left:1094.86px;top:761.91px;letter-spacing:0.261px;transform:scaleX(1.0850);transform-origin:0 0;">Sessions by location</div>
<div class="a link" style="left:1474.40px;top:761.73px;transform:scaleX(1.0810);transform-origin:0 0;">View report</div>
<div class="fade"></div>
</div>
</body>
</html>
